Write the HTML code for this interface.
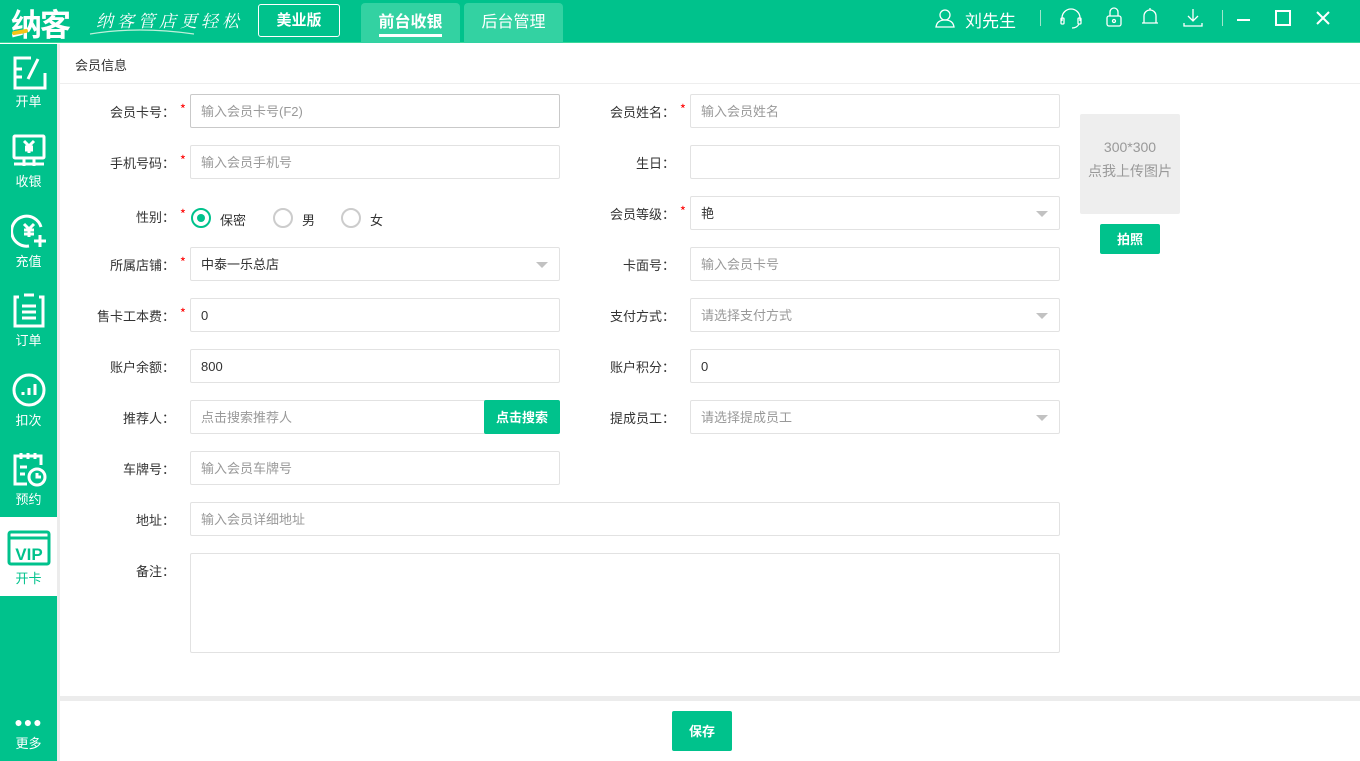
<!DOCTYPE html>
<html><head><meta charset="utf-8"><style>
*{margin:0;padding:0;box-sizing:border-box}
body{width:1360px;height:761px;overflow:hidden;position:relative;font-family:"Liberation Sans","Noto Sans CJK SC",sans-serif;font-size:13px;color:#333;background:#fff}
.a{position:absolute}
.top{left:0;top:0;width:1360px;height:43px;background:#00c28c;border-bottom:1px solid #3ad79b}
.side{left:0;top:44px;width:57px;height:717px;background:#00c28c}
.strip{left:57px;top:44px;width:3px;height:717px;background:#ececec}
.nav{position:absolute;left:0;width:57px;text-align:center;color:#fff;font-size:13px}
.nav svg{display:block;margin:0 auto 2px}
.lbl{position:absolute;text-align:right;font-size:13px;color:#333;line-height:34px;font-family:"Noto Sans CJK SC",sans-serif}
.lbl b{color:#f00;font-weight:normal;position:absolute;right:0;top:-3px}
.in{position:absolute;height:34px;border:1px solid #e2e2e2;border-radius:2px;padding-left:10px;line-height:32px;font-size:13px;color:#999;background:#fff}
.in.v{color:#333}
.dd::after{content:"";position:absolute;right:11px;top:14px;border-left:6px solid transparent;border-right:6px solid transparent;border-top:6px solid #c2c2c2}
.rad{position:absolute;width:20px;height:20px;border:2px solid #ccc;border-radius:50%}
</style></head><body>
<div class="a top"></div>
<div class="a" style="left:11px;top:0px;color:#fff;font-size:31px;font-weight:bold;letter-spacing:-2px">纳客</div>
<div class="a" style="left:12px;top:30px;width:16px;height:4px;background:#f5c518;border-radius:2px;transform:rotate(-10deg)"></div>
<div class="a" style="left:96px;top:7px;color:#fff;font-size:17px;font-family:'Liberation Serif','Noto Serif CJK SC',serif;font-style:italic;letter-spacing:4px">纳客管店更轻松</div>
<svg class="a" style="left:88px;top:26px" width="110" height="10"><path d="M2 8 Q50 0 106 8" stroke="#bff0db" stroke-width="1.2" fill="none"/></svg>
<div class="a" style="left:258px;top:4px;width:82px;height:33px;border:1px solid #fff;border-radius:3px;color:#fff;font-size:15px;font-weight:bold;text-align:center;line-height:31px">美业版</div>
<div class="a" style="left:361px;top:3px;width:99px;height:40px;background:#33d2a2;border-radius:4px 4px 0 0;color:#fff;font-size:16px;font-weight:bold;text-align:center;line-height:40px">前台收银</div>
<div class="a" style="left:379px;top:34px;width:63px;height:3px;background:#fff"></div>
<div class="a" style="left:464px;top:3px;width:99px;height:40px;background:#33d2a2;border-radius:4px 4px 0 0;color:#fff;font-size:16px;text-align:center;line-height:40px">后台管理</div>
<svg class="a" style="left:934px;top:7px" width="22" height="22" fill="none" stroke="#fff" stroke-width="1.3"><circle cx="11" cy="8" r="5"/><path d="M2 20 Q3 13 11 13 Q19 13 20 20 Z"/></svg>
<div class="a" style="left:965px;top:7px;color:#fff;font-size:17px">刘先生</div>
<div class="a" style="left:1040px;top:10px;width:1px;height:16px;background:#9fe6cc"></div>
<div class="a" style="left:1222px;top:10px;width:1px;height:16px;background:#9fe6cc"></div>
<svg class="a" style="left:1059px;top:7px" width="24" height="22" fill="none" stroke="#fff" stroke-width="1.3"><path d="M3 14 V11 A9 9 0 0 1 21 11 V14"/><rect x="2" y="11" width="3" height="6" rx="1"/><rect x="19" y="11" width="3" height="6" rx="1"/><path d="M20 17 Q18 21 13 21"/></svg>
<svg class="a" style="left:1104px;top:6px" width="20" height="22" fill="none" stroke="#fff" stroke-width="1.3"><path d="M6 10 V6 A4 4 0 0 1 14 6 V10"/><rect x="3" y="10" width="14" height="10" rx="2"/><circle cx="10" cy="15" r="1.5"/></svg>
<svg class="a" style="left:1140px;top:6px" width="20" height="22" fill="none" stroke="#fff" stroke-width="1.3"><path d="M4 17 V10 A6 6 0 0 1 16 10 V17 Z M2 17 H18 M10 2 V4"/></svg>
<svg class="a" style="left:1182px;top:7px" width="22" height="22" fill="none" stroke="#fff" stroke-width="1.3"><path d="M11 2 V14 M6 9 L11 14 L16 9 M2 16 V19 H20 V16"/></svg>
<div class="a" style="left:1237px;top:19px;width:13px;height:2px;background:#fff"></div>
<div class="a" style="left:1275px;top:10px;width:16px;height:16px;border:2px solid #fff"></div>
<svg class="a" style="left:1316px;top:11px" width="14" height="14" stroke="#fff" stroke-width="2"><path d="M1 1 L13 13 M13 1 L1 13"/></svg>

<div class="a side"></div>
<div class="a strip"></div>
<div class="nav" style="top:55px"><svg width="36" height="36" fill="none" stroke="#fff" stroke-width="3"><path d="M20 3 H4 V33 H34 V18 M11 14 H4 M11 22 H4 M17 24 L27 4"/></svg><div style="margin-top:-2px">开单</div></div>
<div class="nav" style="top:133px"><svg width="36" height="36" fill="none" stroke="#fff" stroke-width="3"><rect x="3" y="3" width="30" height="22" rx="1"/><path d="M3 31 H33 M13 25 V33 M23 25 V33 M13 8 L18 13 L23 8 M18 13 V20 M14 14 H22 M14 17 H22"/></svg><div style="margin-top:0">收银</div></div>
<div class="nav" style="top:213px"><svg width="36" height="36" fill="none" stroke="#fff" stroke-width="3"><path d="M30 14 A15 15 0 1 0 18 33"/><path d="M13 11 L18 16 L23 11 M18 16 V24 M13 17 H23 M13 21 H23 M29 22 V34 M23 28 H35"/></svg><div>充值</div></div>
<div class="nav" style="top:292px"><svg width="36" height="36" fill="none" stroke="#fff" stroke-width="3"><path d="M13 3 H23 M8 5 H4 V34 H32 V5 H28 M11 14 H25 M11 20 H25 M11 26 H25"/></svg><div>订单</div></div>
<div class="nav" style="top:372px"><svg width="36" height="36" fill="none" stroke="#fff" stroke-width="3"><circle cx="18" cy="18" r="15"/><path d="M12 20 V23 M18 16 V23 M24 12 V23"/></svg><div>扣次</div></div>
<div class="nav" style="top:451px"><svg width="36" height="36" fill="none" stroke="#fff" stroke-width="3"><path d="M16 33 H4 V5 H30 V14 M10 2 V8 M17 2 V8 M24 2 V8 M9 16 H16 M9 23 H14"/><circle cx="26" cy="26" r="8"/><path d="M26 22 V26 H30"/></svg><div>预约</div></div>
<div class="a" style="left:0;top:517px;width:57px;height:79px;background:#fff"></div>
<div class="nav" style="top:530px;color:#00c28c"><svg width="44" height="36" fill="none" stroke="#00c28c" stroke-width="3"><rect x="2" y="2" width="40" height="32" rx="2"/><path d="M2 8 H42"/><text x="22" y="30" text-anchor="middle" font-family="Liberation Sans" font-weight="bold" font-size="17" fill="#00c28c" stroke="none">VIP</text></svg><div>开卡</div></div>
<div class="nav" style="top:717px"><div style="font-size:14px;letter-spacing:1px;line-height:10px;font-weight:bold">●●●</div><div style="margin-top:6px">更多</div></div>

<div class="a" style="left:75px;top:55px;font-size:13px">会员信息</div>
<div class="a" style="left:60px;top:83px;width:1300px;height:1px;background:#eee"></div>

<div class="lbl" style="left:60px;top:95px;width:126px;padding-right:11px">会员卡号：<b>*</b></div>
<div class="in" style="left:190px;top:94px;width:370px;border-color:#c9c9c9;line-height:34px">输入会员卡号(F2)</div>
<div class="lbl" style="left:60px;top:146px;width:126px;padding-right:11px">手机号码：<b>*</b></div>
<div class="in" style="left:190px;top:145px;width:370px;line-height:34px">输入会员手机号</div>
<div class="lbl" style="left:60px;top:200px;width:126px;padding-right:11px">性别：<b>*</b></div>
<div class="rad" style="left:191px;top:208px;border-color:#00c28c"><div style="position:absolute;left:4px;top:4px;width:8px;height:8px;border-radius:50%;background:#00c28c"></div></div>
<div class="a" style="left:220px;top:210px">保密</div>
<div class="rad" style="left:273px;top:208px"></div><div class="a" style="left:302px;top:210px">男</div>
<div class="rad" style="left:341px;top:208px"></div><div class="a" style="left:370px;top:210px">女</div>
<div class="lbl" style="left:60px;top:248px;width:126px;padding-right:11px">所属店铺：<b>*</b></div>
<div class="in v dd" style="left:190px;top:247px;width:370px;line-height:34px">中泰一乐总店</div>
<div class="lbl" style="left:60px;top:299px;width:126px;padding-right:11px">售卡工本费：<b>*</b></div>
<div class="in v" style="left:190px;top:298px;width:370px;line-height:34px">0</div>
<div class="lbl" style="left:60px;top:350px;width:126px;padding-right:11px">账户余额：</div>
<div class="in v" style="left:190px;top:349px;width:370px;line-height:34px">800</div>
<div class="lbl" style="left:60px;top:401px;width:126px;padding-right:11px">推荐人：</div>
<div class="in" style="left:190px;top:400px;width:300px;line-height:34px">点击搜索推荐人</div>
<div class="a" style="left:484px;top:400px;width:76px;height:34px;background:#00c28c;color:#fff;border-radius:2px;text-align:center;line-height:36px;font-weight:bold">点击搜索</div>
<div class="lbl" style="left:60px;top:452px;width:126px;padding-right:11px">车牌号：</div>
<div class="in" style="left:190px;top:451px;width:370px;line-height:34px">输入会员车牌号</div>
<div class="lbl" style="left:60px;top:503px;width:126px;padding-right:11px">地址：</div>
<div class="in" style="left:190px;top:502px;width:870px;line-height:34px">输入会员详细地址</div>
<div class="lbl" style="left:60px;top:554px;width:126px;padding-right:11px">备注：</div>
<div class="in" style="left:190px;top:553px;width:870px;height:100px"></div>

<div class="lbl" style="left:560px;top:95px;width:126px;padding-right:11px">会员姓名：<b>*</b></div>
<div class="in" style="left:690px;top:94px;width:370px;line-height:34px">输入会员姓名</div>
<div class="lbl" style="left:560px;top:146px;width:126px;padding-right:11px">生日：</div>
<div class="in" style="left:690px;top:145px;width:370px"></div>
<div class="lbl" style="left:560px;top:197px;width:126px;padding-right:11px">会员等级：<b>*</b></div>
<div class="in v dd" style="left:690px;top:196px;width:370px;line-height:34px">艳</div>
<div class="lbl" style="left:560px;top:248px;width:126px;padding-right:11px">卡面号：</div>
<div class="in" style="left:690px;top:247px;width:370px;line-height:34px">输入会员卡号</div>
<div class="lbl" style="left:560px;top:299px;width:126px;padding-right:11px">支付方式：</div>
<div class="in dd" style="left:690px;top:298px;width:370px;line-height:34px">请选择支付方式</div>
<div class="lbl" style="left:560px;top:350px;width:126px;padding-right:11px">账户积分：</div>
<div class="in v" style="left:690px;top:349px;width:370px;line-height:34px">0</div>
<div class="lbl" style="left:560px;top:401px;width:126px;padding-right:11px">提成员工：</div>
<div class="in dd" style="left:690px;top:400px;width:370px;line-height:34px">请选择提成员工</div>

<div class="a" style="left:1080px;top:114px;width:100px;height:100px;background:#eee;border-radius:2px;color:#999;text-align:center;font-size:14px;line-height:24px;padding-top:21px">300*300<br>点我上传图片</div>
<div class="a" style="left:1100px;top:224px;width:60px;height:30px;background:#00c28c;border-radius:2px;color:#fff;text-align:center;line-height:31px;font-weight:bold">拍照</div>

<div class="a" style="left:60px;top:696px;width:1300px;height:5px;background:#ececec"></div>
<div class="a" style="left:672px;top:711px;width:60px;height:40px;background:#00c28c;border-radius:2px;color:#fff;text-align:center;line-height:42px;font-weight:bold">保存</div>
</body></html>
